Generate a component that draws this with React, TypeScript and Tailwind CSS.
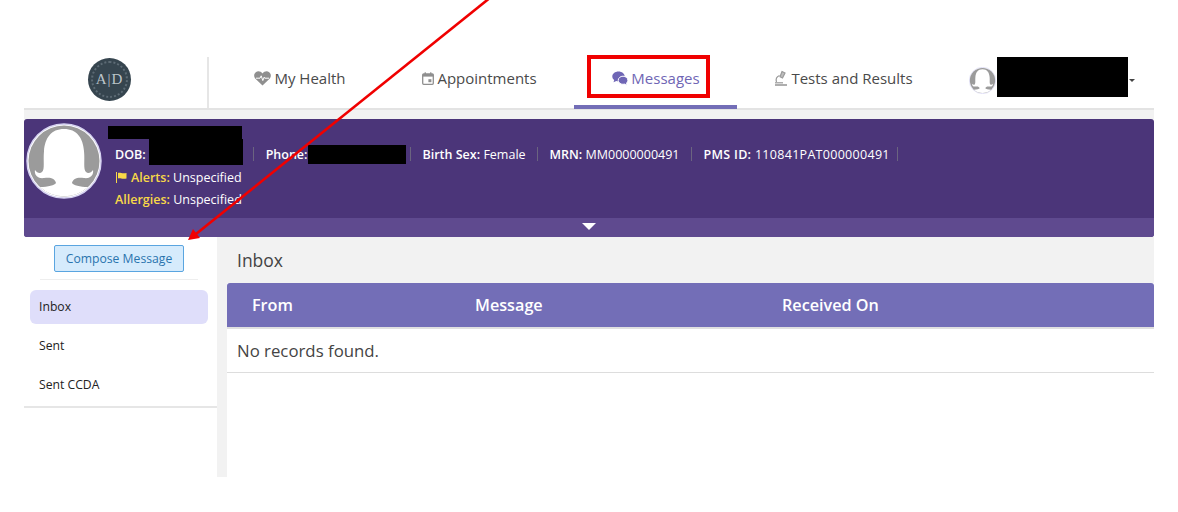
import type { FC, ReactNode } from 'react';

const Silhouette: FC<{ size: number; ring: string }> = ({ size, ring }) => (
  <svg width={size} height={size} viewBox="0 0 76 76" className="shrink-0">
    <circle cx="38" cy="38" r="37" fill="#ffffff" stroke={ring} strokeWidth="1.500" />
    <circle cx="38" cy="38" r="35.500" fill="#9b9b9b" />
    <path
      d="M38 6C25 6 19 15 18 28C17 38 19 46 16 49C14 51 11 50 9 47C8 52 12 56 18 55C24 54 29 55 30 60C29 62 22 64 14 64A35.500 35.500 0 0 0 62 64C54 64 47 62 46 60C47 55 52 54 58 55C64 56 68 52 67 47C65 50 62 51 60 49C57 46 59 38 58 28C57 15 51 6 38 6Z"
      fill="#ffffff"
    />
  </svg>
);

const HeartIcon = () => (
  <svg width="17" height="15" viewBox="0 0 17 15">
    <path d="M8.500 14.500L1.700 8C-0.500 5.800 -0.200 2.700 1.800 1.200C3.800 -0.300 6.800 0.200 8.500 2.400C10.200 0.200 13.200 -0.300 15.200 1.200C17.200 2.700 17.500 5.800 15.300 8Z" fill="#8f8f8f" />
    <path d="M2 7.200H6L7.200 4.800L8.800 9.600L10.200 6.200L10.800 7.200H15" fill="none" stroke="#ffffff" strokeWidth="1" />
  </svg>
);

const CalendarIcon = () => (
  <svg width="12" height="13" viewBox="0 0 12 13" fill="none">
    <rect x="0.700" y="2" width="10.600" height="10.300" rx="1" stroke="#8f8f8f" strokeWidth="1.300" />
    <rect x="0.700" y="2" width="10.600" height="2.600" fill="#8f8f8f" />
    <rect x="2.600" y="0.300" width="1.300" height="2" fill="#8f8f8f" />
    <rect x="8.100" y="0.300" width="1.300" height="2" fill="#8f8f8f" />
    <rect x="6.400" y="7.200" width="3" height="3" fill="#8f8f8f" />
  </svg>
);

const ChatIcon = () => (
  <svg width="16" height="15" viewBox="0 0 16 15">
    <path d="M6.500 0.500C3 0.500 0.300 2.700 0.300 5.500C0.300 7 1 8.200 2.200 9.100L1.500 11.300L4.300 10C5 10.200 5.700 10.300 6.500 10.300C10 10.300 12.700 8.200 12.700 5.500C12.700 2.700 10 0.500 6.500 0.500Z" fill="#6f66b5" />
    <path d="M11 5.200C8.400 5.200 6.200 7 6.200 9.300C6.200 11.500 8.400 13.300 11 13.300C11.500 13.300 12 13.200 12.500 13.100L15 14.500L14.500 12.200C15.400 11.400 15.900 10.400 15.900 9.300C15.900 7 13.700 5.200 11 5.200Z" fill="#6f66b5" stroke="#ffffff" strokeWidth="1" />
  </svg>
);

const FlaskIcon = () => (
  <svg width="14" height="16" viewBox="0 0 14 16" fill="none" stroke="#9a9a9a" strokeWidth="1.200">
    <path d="M8 1.500L11 3L8.500 8L6 6.800Z" fill="#bdbdbd" />
    <path d="M5.500 5.500C2.800 6.500 1.600 9 2.500 12" />
    <path d="M1 12.800H9" />
    <path d="M1 15H13" strokeWidth="1.600" />
  </svg>
);

const FlagIcon = () => (
  <svg width="11" height="11" viewBox="0 0 11 11">
    <rect x="0" y="0" width="1" height="11" fill="#f8d848" />
    <path d="M2 1C4 0 6 2.200 10.500 1V6.500C6 7.700 4 5.500 2 6.500Z" fill="#f8d848" />
  </svg>
);

const NavItem: FC<{ icon: ReactNode; label: string; width: string; active?: boolean }> = ({ icon, label, width, active }) => (
  <div
    className={`flex h-[52px] items-center justify-center gap-[3px] border-b-4 pb-[6px] text-[15px] ${width} ${
      active ? 'border-[#736eb7] text-[#6f66b5]' : 'border-transparent text-[#4a4a4a]'
    }`}
  >
    {icon}
    <span>{label}</span>
  </div>
);

const Divider: FC<{ className: string }> = ({ className }) => <span className={`h-[14px] w-px bg-[#6b6480] ${className}`} />;

const Field: FC<{ label: string; value: string; className?: string }> = ({ label, value, className }) => (
  <span className={`whitespace-nowrap ${className ?? ''}`}>
    <span className="font-semibold">{label}</span> {value}
  </span>
);

const Redacted: FC<{ className: string }> = ({ className }) => <div className={`bg-black ${className}`} />;

export default function App() {
  return (
    <div className="relative h-[512px] w-[1178px] overflow-hidden bg-white font-['Open_Sans',sans-serif]">
      <div className="ml-6 w-[1130px] pt-[57px]">
        {/* Top nav */}
        <header className="flex h-[53px] border-b-2 border-[#e3e3e3]">
          <div className="flex w-[185px] items-center justify-center border-r-2 border-[#e6e6e6] pr-[12px] pb-[6px]">
            <div className="flex h-[43px] w-[43px] items-center justify-center rounded-full bg-[#36454f] font-['Liberation_Serif',serif] text-[15px] tracking-[1px] text-[#bcc4c9] outline-2 -outline-offset-5 outline-dotted outline-[#5d6b75]">
              A|D
            </div>
          </div>
          <NavItem icon={<HeartIcon />} label="My Health" width="w-[167px] pl-[15px]" />
          <NavItem icon={<CalendarIcon />} label="Appointments" width="w-[198px] pl-[9px]" />
          <NavItem icon={<ChatIcon />} label="Messages" width="w-[163px] pl-px" active />
          <NavItem icon={<FlaskIcon />} label="Tests and Results" width="w-[216px] pr-[3px]" />
          <div className="flex items-start pl-[16px]">
            <div className="mt-[10px]">
              <Silhouette size={27} ring="#c9c7ee" />
            </div>
            <Redacted className="ml-[1px] h-10 w-[131px]" />
            <span className="mt-[22px] ml-px h-0 w-0 border-x-[3px] border-t-[3px] border-x-transparent border-t-[#444]" />
          </div>
        </header>

        <div className="h-[9px] bg-[#f2f2f2]" />

        {/* Patient banner */}
        <section className="overflow-hidden rounded-[3px] bg-[#4b3579] text-white">
          <div className="flex h-[99px] items-start pl-[2px] pt-[4px]">
            <Silhouette size={76} ring="#d5d2f0" />
            <div className="ml-[6px]">
              <Redacted className="mt-[3px] h-[13px] w-[134px]" />
              <div className="flex h-[26px] items-center pl-[7px] pt-[4px] text-[12.5px] leading-[19px]">
                <span className="font-semibold">DOB:</span>
                <Redacted className="-mt-[4px] ml-[3px] h-[26px] w-[94px]" />
                <Divider className="mr-[12px] ml-[10px]" />
                <span className="font-semibold">Phone:</span>
                <Redacted className="mt-[1px] h-[19px] w-[98px]" />
                <Divider className="mr-[12px] ml-[4px]" />
                <Field label="Birth Sex:" value="Female" />
                <Divider className="mx-[11.500px]" />
                <Field label="MRN:" value="MM0000000491" />
                <Divider className="mx-[11.500px]" />
                <Field label="PMS ID:" value="110841PAT000000491" className="tracking-[0.3px]" />
                <Divider className="ml-[7px]" />
              </div>
              <div className="mt-[3px] flex items-center gap-1 pl-[8px] text-[12.5px] leading-[19px]">
                <FlagIcon />
                <span>
                  <span className="font-semibold text-[#f8d848]">Alerts:</span> Unspecified
                </span>
              </div>
              <div className="mt-[3px] pl-[7px] text-[12.5px] leading-[19px]">
                <span className="font-semibold text-[#f8d848]">Allergies:</span> Unspecified
              </div>
            </div>
          </div>
          <div className="flex h-[19px] items-center justify-center bg-[#5f4a8f] pb-[2px]">
            <span className="h-0 w-0 border-x-[7px] border-t-[7px] border-x-transparent border-t-white" />
          </div>
        </section>

        {/* Body */}
        <div className="flex h-[240px] bg-[#f2f2f2]">
          <aside className="h-full w-[193px] bg-white">
            <div className="mr-[19px] ml-[16px] flex h-[43px] items-start justify-center border-b border-[#eeeeee] pt-[8px]">
              <button className="h-[27px] w-[130px] rounded-[2px] border border-[#5aa5e0] bg-[#d6ebfc] pt-px text-[12.2px] text-[#2a74ae]">
                Compose Message
              </button>
            </div>
            <nav className="border-b-2 border-[#e6e6e6] pt-[10px] pr-[9px] pb-[4px] pl-[6px] text-[12.2px] text-[#222]">
              <div className="flex h-[34px] items-center rounded-[6px] bg-[#dfdefa] px-[9px]">Inbox</div>
              <div className="mt-[5px] flex h-[34px] items-center px-[9px]">Sent</div>
              <div className="mt-[5px] flex h-[34px] items-center px-[9px]">Sent CCDA</div>
            </nav>
          </aside>
          <main className="ml-[10px] flex-1">
            <h1 className="flex h-[46px] items-center pl-[10px] text-[17.5px] text-[#444]">Inbox</h1>
            <div className="h-full bg-white">
              <div className="grid h-[46px] grid-cols-[223px_307px_1fr] items-center rounded-t-[3px] border-b-2 border-[#e0e0e0] bg-[#736eb7] pt-[1px] pl-[25px] text-[16.2px] font-semibold text-white">
                <span>From</span>
                <span>Message</span>
                <span>Received On</span>
              </div>
              <div className="flex h-[44px] items-center border-b border-[#dddddd] pl-[10px] text-[16.8px] text-[#444]">
                No records found.
              </div>
            </div>
          </main>
        </div>
      </div>

      {/* Annotations drawn over the screenshot */}
      <div className="absolute top-[55px] left-[587px] h-[43px] w-[123px] border-4 border-[#f00000]" />
      <svg className="absolute inset-0" width="1178" height="512" viewBox="0 0 1178 512">
        <line x1="491" y1="-3" x2="196" y2="234" stroke="#f00000" strokeWidth="2.600" />
        <polygon points="188,240 193,229 200,238" fill="#f00000" />
      </svg>
    </div>
  );
}
